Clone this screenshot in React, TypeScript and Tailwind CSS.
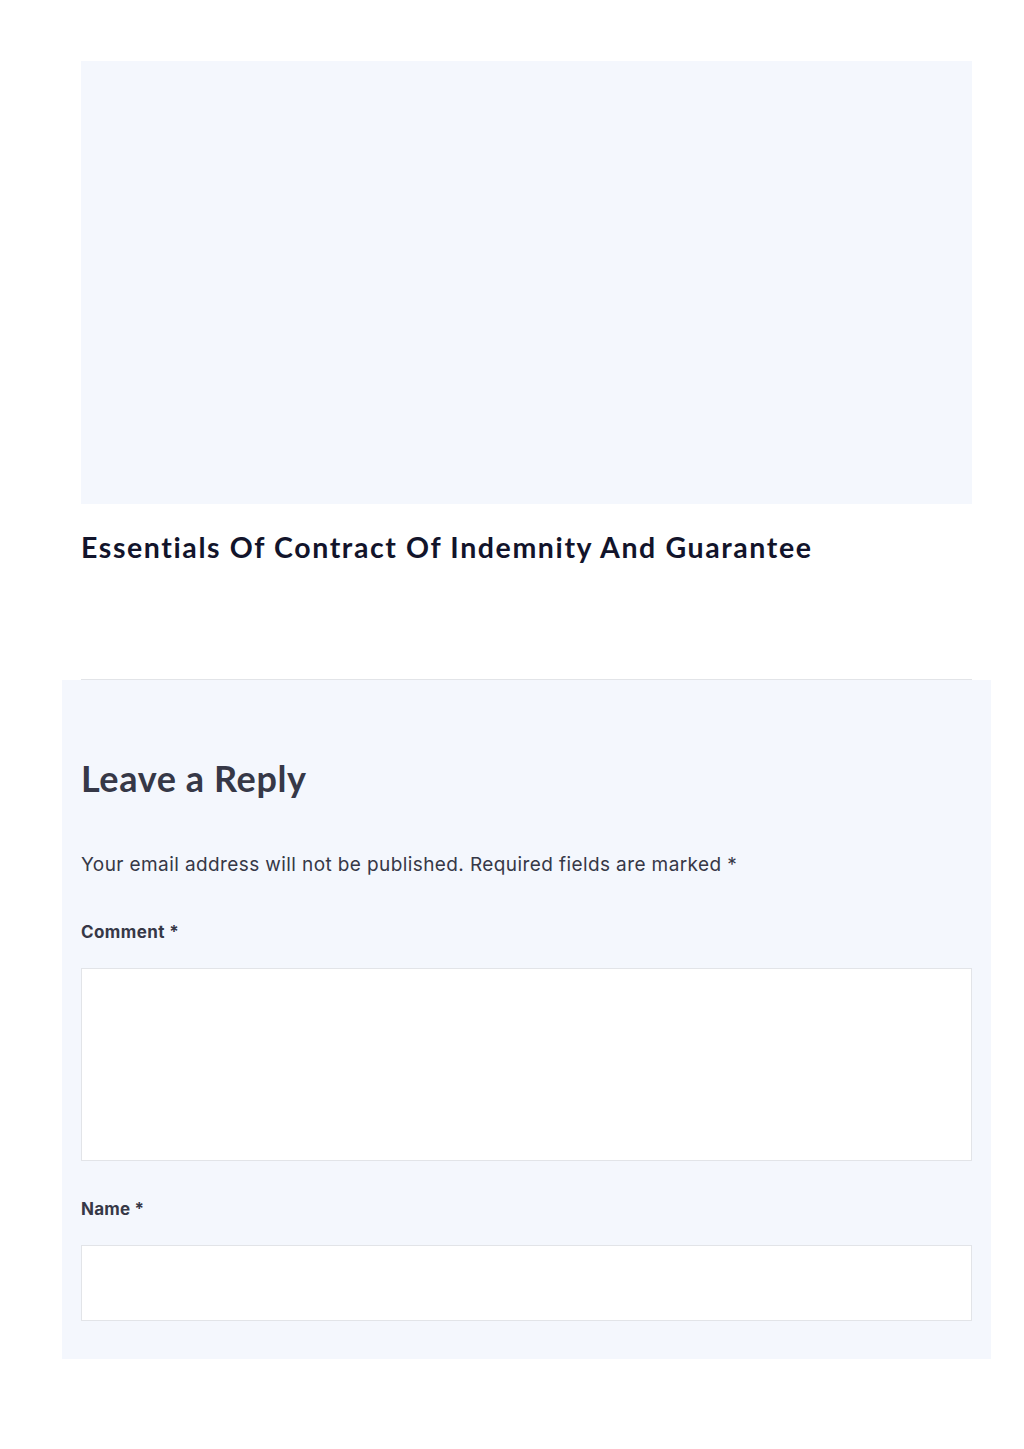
import React from 'react';

export default function App() {
  return (
    <div className="min-h-[1449px] w-[1024px] bg-white font-['Inter',sans-serif]">
      <div className="ml-[62px] w-[929px] pt-[61px] pb-[90px]">
        {/* Post card */}
        <article className="px-[19px]">
          <div className="h-[443px] w-full bg-[#f4f7fd]" />
          <h2 className="mt-[25px] text-[28.5px] leading-[36px] font-bold text-[#12142b] font-['Lato',sans-serif] tracking-[1.6px]">
            Essentials Of Contract Of Indemnity And Guarantee
          </h2>
          <div className="mt-[114px] border-t border-[#e2e4e8]" />
        </article>

        {/* Comment form */}
        <section className="bg-[#f4f7fd] px-[19px] pt-[76px] pb-[38px]">
          <h3 className="text-[36px] leading-[44px] font-bold text-[#363847] font-['Lato',sans-serif] tracking-[0.6px]">
            Leave a Reply
          </h3>
          <p className="mt-[51px] text-[19px] leading-[28px] text-[#363847] tracking-[0.4px]">
            Your email address will not be published. Required fields are marked *
          </p>
          <label className="mt-[41px] block text-[17px] leading-[24px] font-bold text-[#363847] tracking-[0.4px]">
            Comment *
          </label>
          <textarea className="mt-[24px] block h-[193px] w-full resize-none border border-[#e2e4e8] bg-white" />
          <label className="mt-[36px] block text-[17px] leading-[24px] font-bold text-[#363847] tracking-[0.2px]">
            Name *
          </label>
          <input type="text" className="mt-[24px] block h-[76px] w-full border border-[#e2e4e8] bg-white" />
        </section>
      </div>
    </div>
  );
}
